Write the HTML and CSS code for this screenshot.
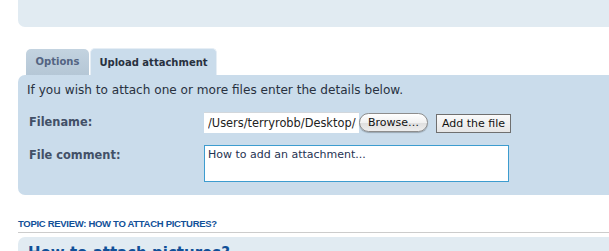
FILE: index.html
```html
<!DOCTYPE html>
<html>
<head>
<meta charset="utf-8">
<link rel="stylesheet" href="styles.css">
</head>
<body>
<div class="wrap">
  <div class="top-panel"></div>
  <div class="tabs">
    <div class="tab">Options</div>
    <div class="tab active">Upload attachment</div>
  </div>
  <div class="panel">
    <p class="intro">If you wish to attach one or more files enter the details below.</p>
    <div class="row">
      <div class="label">Filename:</div>
      <div class="field">
        <div class="file-input"><span>/Users/terryrobb/Desktop/attachment.png</span></div>
        <button class="browse">Browse…</button>
        <button class="add">Add the file</button>
      </div>
    </div>
    <div class="row row-comment">
      <div class="label">File comment:</div>
      <div class="field">
        <div class="comment">How to add an attachment...</div>
      </div>
    </div>
  </div>
  <h3 class="review">Topic review: How to attach pictures?</h3>
  <div class="post">
    <h4 class="post-title">How to attach pictures?</h4>
  </div>
</div>
</body>
</html>
```

FILE: styles.css
```css
html, body {
  margin: 0;
  padding: 0;
  background: #ffffff;
  overflow: hidden;
}
.wrap {
  padding-left: 18px;
  width: 620px;
  font-family: "DejaVu Sans", Verdana, sans-serif;
}
.top-panel {
  height: 27px;
  background: #e1ebf2;
  border-radius: 0 0 7px 7px;
}
.tabs {
  display: flex;
  align-items: flex-end;
  margin-top: 21px;
  padding-left: 8px;
  gap: 1px;
  height: 27px;
}
.tab {
  box-sizing: border-box;
  height: 26px;
  width: 63px;
  padding-top: 7px;
  text-align: center;
  font-size: 10px;
  font-weight: bold;
  color: #536482;
  background: linear-gradient(#c3d3e0, #b5c7d6);
  border-radius: 5px 5px 0 0;
}
.tab.active {
  height: 27px;
  width: 127px;
  padding-top: 8px;
  color: #28313f;
  background: #cadceb;
  border: 1px solid #e6eef5;
  border-bottom: none;
}
.panel {
  background: #cadceb;
  border-radius: 7px;
  height: 120px;
  box-sizing: border-box;
  padding: 7px 0 0 11px;
}
.intro {
  margin: 0 0 0 -2px;
  font-size: 12.1px;
  line-height: 16px;
  color: #28313f;
  white-space: nowrap;
}
.row {
  display: flex;
  margin-top: 14px;
}
.row-comment {
  margin-top: 12px;
}
.label {
  width: 175px;
  font-size: 11.4px;
  font-weight: bold;
  color: #425067;
  padding-top: 3px;
}
.field {
  display: flex;
  align-items: flex-start;
}
.file-input {
  box-sizing: border-box;
  width: 155px;
  height: 21px;
  background: #fff;
  border-top: 1px solid #d2d7dc;
  padding: 3px 0 0 4px;
  font-size: 11.4px;
  white-space: nowrap;
  overflow: hidden;
  color: #222;
}
.file-input span {
  display: block;
  width: 148px;
  overflow: hidden;
}
button {
  font-family: "DejaVu Sans", Verdana, sans-serif;
  font-size: 11px;
  color: #111;
  cursor: pointer;
}
.browse {
  box-sizing: border-box;
  margin: 1px 0 0 0;
  width: 69px;
  height: 19px;
  padding: 0;
  border: 1px solid #8d8d8d;
  border-radius: 10px;
  background: linear-gradient(#ffffff, #f1f1f1 50%, #dedede 51%, #eeeeee);
  box-shadow: 0 1px 1px rgba(0,0,0,0.25);
}
.add {
  box-sizing: border-box;
  margin: 2px 0 0 8px;
  width: 75px;
  height: 19px;
  padding: 0;
  border: 1px solid #6f6f6f;
  border-radius: 0;
  background: linear-gradient(#fafafa, #e6e6e6);
}
.comment {
  box-sizing: border-box;
  width: 305px;
  height: 37px;
  background: #fff;
  border: 1px solid #3d9ccf;
  padding: 2px 3px;
  font-size: 11px;
  color: #1f3352;
}
.review {
  margin: 23px 0 0 0;
  padding-bottom: 2px;
  border-bottom: 1px solid #cccccc;
  font-family: "Liberation Sans", Arial, sans-serif;
  font-size: 9.5px;
  letter-spacing: -0.3px;
  line-height: 12px;
  text-transform: uppercase;
  font-weight: bold;
  color: #115098;
}
.post {
  margin-top: 4px;
  background: #e1ebf2;
  border-radius: 7px;
  height: 40px;
  padding: 7px 0 0 10px;
  box-sizing: border-box;
}
.post-title {
  margin: 0;
  font-family: "DejaVu Sans", sans-serif;
  font-size: 15px;
  font-weight: bold;
  color: #115098;
}
```
